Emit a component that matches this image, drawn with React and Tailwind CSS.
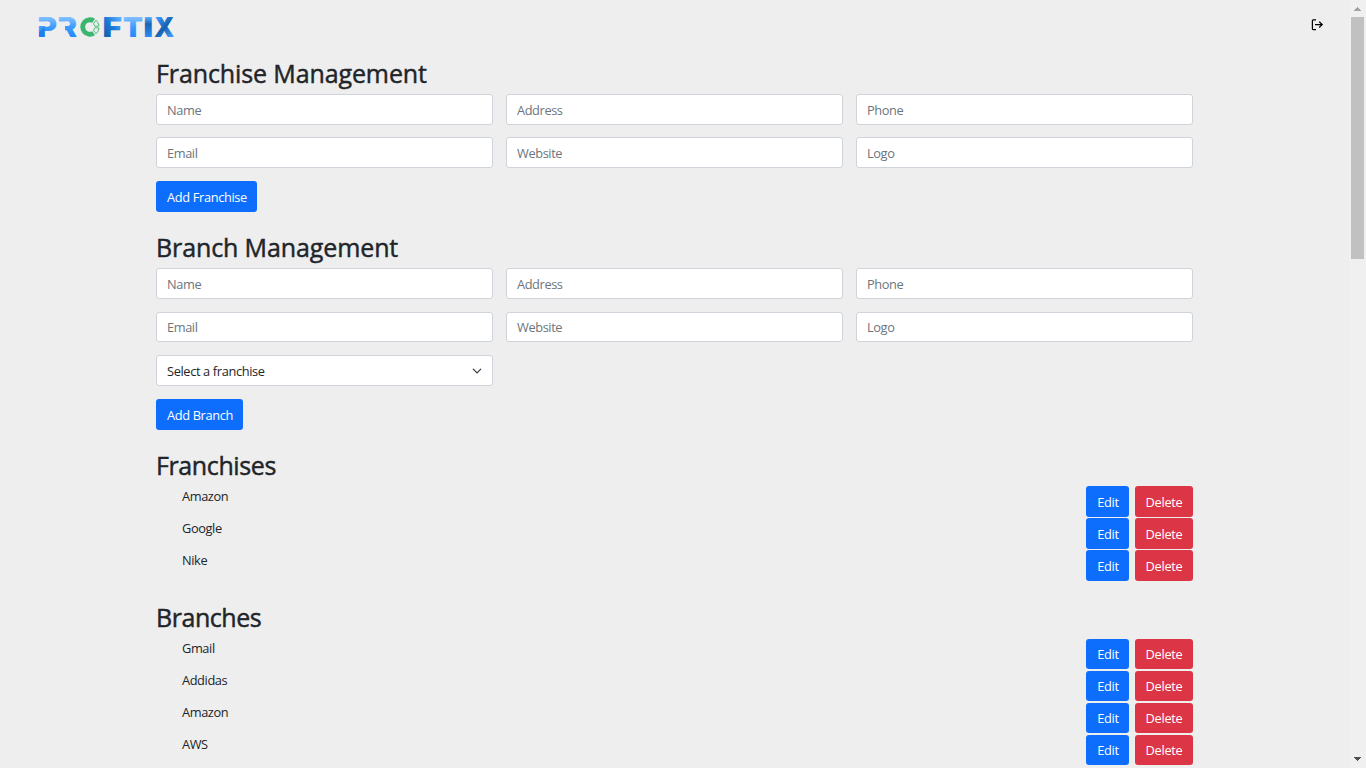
import React from 'react';

const fieldBox =
  'block w-[337px] rounded-[3px] border border-[#ced4da] bg-white px-[10px] text-[12.8px] outline-none placeholder:text-[#6c757d] placeholder:opacity-100';

function Field({ label, height = 'h-[31px]' }) {
  return <input className={`${fieldBox} pb-px pt-px tracking-[-0.4px] ${height}`} placeholder={label} />;
}

function Heading({ children, className }) {
  return (
    <h2 className={`h-[31px] whitespace-nowrap text-[25px] font-medium leading-[29px] [-webkit-text-stroke:0.45px_#212529] ${className}`}>
      {children}
    </h2>
  );
}

function Button({ children, className }) {
  return (
    <button className={`flex items-center justify-center whitespace-nowrap rounded-[3px] pt-[2px] text-[12.8px] text-white ${className}`}>
      {children}
    </button>
  );
}

function Row({ name, size = 'h-[31px]', drop = '' }) {
  return (
    <li className="flex h-8 items-start pl-[26px]">
      <span className="mt-px flex-1 text-[12.8px] leading-[19px] tracking-[-0.4px]">{name}</span>
      <div className={`flex gap-[6px] ${drop}`}>
        <Button className={`w-[43px] bg-[#0d6efd] pl-px tracking-[-0.3px] ${size}`}>Edit</Button>
        <Button className={`w-[58px] bg-[#dc3545] tracking-[-0.3px] ${size}`}>Delete</Button>
      </div>
    </li>
  );
}

function Logo() {
  return (
    <svg className="overflow-visible" width="136" height="22" viewBox="0 0 136 22" fontFamily="Inter, sans-serif" fontWeight="900" fontSize="27.5" aria-label="Proftix">
      <defs>
        <linearGradient id="light" gradientUnits="userSpaceOnUse" x1="0" y1="1" x2="0" y2="21">
          <stop offset="0" stopColor="#84c1ff" />
          <stop offset="0.5" stopColor="#3c9bff" />
          <stop offset="1" stopColor="#2589fa" />
        </linearGradient>
        <linearGradient id="deep" gradientUnits="userSpaceOnUse" x1="65" y1="18" x2="82" y2="4">
          <stop offset="0" stopColor="#155fae" />
          <stop offset="0.5" stopColor="#1c79d8" />
          <stop offset="1" stopColor="#55acff" />
        </linearGradient>
        <linearGradient id="pillar" gradientUnits="userSpaceOnUse" x1="0" y1="1" x2="0" y2="21">
          <stop offset="0" stopColor="#5cb0ff" />
          <stop offset="0.35" stopColor="#1665b8" />
          <stop offset="1" stopColor="#2c8df5" />
        </linearGradient>
        <linearGradient id="cross" gradientUnits="userSpaceOnUse" x1="117" y1="2" x2="134" y2="21">
          <stop offset="0" stopColor="#3b9bff" />
          <stop offset="0.5" stopColor="#1460b0" />
          <stop offset="1" stopColor="#49a3ff" />
        </linearGradient>
      </defs>
      <text x="-1.5" y="21" textLength="19.5" lengthAdjust="spacingAndGlyphs" fill="url(#light)">P</text>
      <text x="18.5" y="21" textLength="19.5" lengthAdjust="spacingAndGlyphs" fill="url(#light)">R</text>
      <path d="M-1 5.5H6V10H-1Z M19 5.5H26V22H19Z" fill="#eeeeee" />
      <path d="M0 20.5V16L5.5 11V20.5Z" fill="#1b78df" opacity="0.7" />
      <circle cx="51" cy="11" r="11" fill="#eeeeee" />
      <path d="M56 2.7A9.7 9.7 0 1 0 56 19.3L53.3 15.2A4.8 4.8 0 1 1 53.3 6.8Z" fill="#3cb56f" />
      <path d="M57 4.2A9 9 0 0 1 60 10L56 10.3L54.5 7.8ZM60 12A9 9 0 0 1 57 17.8L54.5 14.2L56 11.7Z" fill="none" stroke="#3cb56f" strokeWidth="0.9" />
      <text x="63.5" y="21" textLength="19.5" lengthAdjust="spacingAndGlyphs" fill="url(#deep)">F</text>
      <text x="84" y="21" textLength="20" lengthAdjust="spacingAndGlyphs" fill="url(#light)">T</text>
      <text x="104.2" y="21" textLength="10" lengthAdjust="spacingAndGlyphs" fill="url(#pillar)">I</text>
      <text x="115" y="21" textLength="20.5" lengthAdjust="spacingAndGlyphs" fill="url(#cross)">X</text>
    </svg>
  );
}

export default function App() {
  return (
    <div className="flex h-screen w-full overflow-hidden bg-[#eeeeee] font-['Open_Sans','Noto_Sans',sans-serif] text-[#212529]">
      <div className="flex min-w-0 flex-1 flex-col">
        <header className="flex h-[59px] items-start justify-between pl-[39px] pr-[25px] pt-4">
          <Logo />
          <svg className="mt-[3px]" width="13" height="12" viewBox="0 0 13 12" fill="none" stroke="#000" strokeWidth="1.25" aria-label="Log out">
            <path d="M5 0.9H2.2Q1.4 0.9 1.4 1.7V9.8Q1.4 10.6 2.2 10.6H5" />
            <path d="M4 5.6H11.2M8.2 2.7L11.2 5.6L8.2 8.5" />
          </svg>
        </header>
        <main className="ml-[156px] w-[1037px]">
          <Heading className="tracking-[-0.11px]">Franchise Management</Heading>
          <div className="mt-1 grid grid-cols-3 gap-x-[13px] gap-y-3">
            <Field label="Name" />
            <Field label="Address" />
            <Field label="Phone" />
            <Field label="Email" />
            <Field label="Website" />
            <Field label="Logo" />
          </div>
          <Button className="mt-[13px] h-[31px] w-[101px] bg-[#0d6efd] pl-px tracking-[-0.35px]">Add Franchise</Button>

          <Heading className="mt-[21px] tracking-[-0.11px]">Branch Management</Heading>
          <div className="mt-1 grid grid-cols-3 gap-x-[13px] gap-y-[13px]">
            <Field label="Name" />
            <Field label="Address" />
            <Field label="Phone" />
            <Field label="Email" height="h-[30px]" />
            <Field label="Website" height="h-[30px]" />
            <Field label="Logo" height="h-[30px]" />
            <div className="relative">
              <select className={`${fieldBox} h-[31px] appearance-none pt-[2px] tracking-[-0.36px]`}>
                <option>Select a franchise</option>
              </select>
              <svg className="pointer-events-none absolute right-[11px] top-[11px]" width="10" height="10" viewBox="0 0 16 16" fill="none" stroke="#343a40" strokeWidth="2" strokeLinecap="round" strokeLinejoin="round">
                <path d="m2 5 6 6 6-6" />
              </svg>
            </div>
          </div>
          <Button className="mt-[13px] h-[31px] w-[87px] bg-[#0d6efd] pl-px tracking-[-0.35px]">Add Branch</Button>

          <Heading className="mt-[21px] tracking-[-0.38px]">Franchises</Heading>
          <ul className="mt-[4px]">
            <Row name="Amazon" />
            <Row name="Google" />
            <Row name="Nike" />
          </ul>

          <Heading className="mt-[21px] tracking-[-0.45px]">Branches</Heading>
          <ul className="mt-[4px]">
            <Row name="Gmail" size="h-[30px]" drop="mt-px" />
            <Row name="Addidas" size="h-[30px]" drop="mt-px" />
            <Row name="Amazon" size="h-[30px]" drop="mt-px" />
            <Row name="AWS" size="h-[30px]" drop="mt-px" />
          </ul>
        </main>
      </div>
      <div className="flex w-[17px] flex-col items-center bg-[#f0f0f0]">
        <svg className="block h-[17px] w-[17px]" viewBox="0 0 17 17" fill="#a3a3a3" shapeRendering="crispEdges">
          <path d="M5 11L8.5 7L12 11Z" />
        </svg>
        <div className="h-[242px] w-[13px] bg-[#c1c1c1]" />
        <div className="flex-1" />
        <svg className="block h-[17px] w-[17px]" viewBox="0 0 17 17" fill="#505050" shapeRendering="crispEdges">
          <path d="M5 6L8.5 10L12 6Z" />
        </svg>
      </div>
    </div>
  );
}
